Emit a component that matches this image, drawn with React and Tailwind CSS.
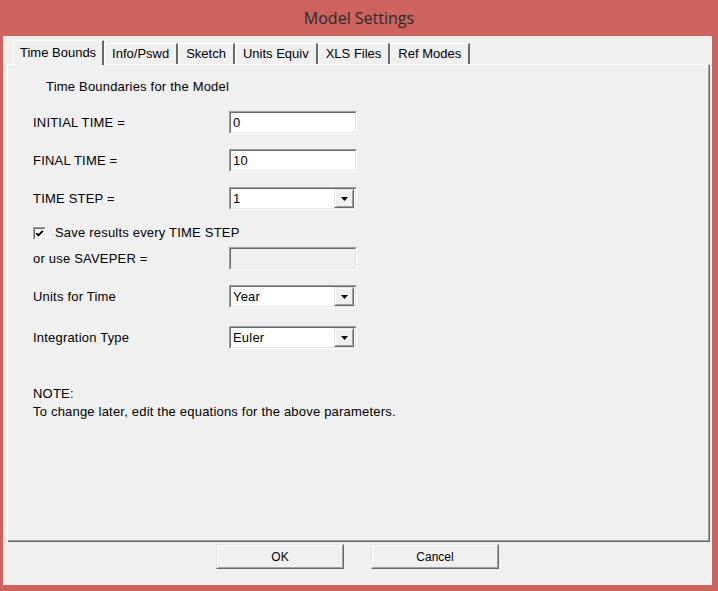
import React from 'react';

const font = { fontFamily: '"Liberation Sans", Arial, sans-serif' };

// classic 3D sunken frame (text fields, combo boxes, checkbox)
const Sunken = ({ className = '', inner = 'bg-white', children }) => (
  <div className={`flex border border-t-[#a0a0a0] border-l-[#a0a0a0] border-r-white border-b-white ${className}`}>
    <div className={`flex flex-1 items-center border border-t-[#696969] border-l-[#696969] border-r-[#e3e3e3] border-b-[#e3e3e3] ${inner}`}>
      {children}
    </div>
  </div>
);

// classic 3D raised frame (buttons)
const Raised = ({ className = '', children }) => (
  <div className={`flex border border-t-[#e3e3e3] border-l-[#e3e3e3] border-r-[#696969] border-b-[#696969] ${className}`}>
    <div className="flex flex-1 items-center justify-center border border-t-white border-l-white border-r-[#a0a0a0] border-b-[#a0a0a0] bg-[#f0f0f0]">
      {children}
    </div>
  </div>
);

const TextField = ({ value, disabled }) => (
  <Sunken className="w-[128px] h-[23px]" inner={disabled ? 'bg-[#f0f0f0]' : 'bg-white'}>
    <span className="pl-[2px] text-[13px] tracking-[0.2px] text-black">{value}</span>
  </Sunken>
);

const Combo = ({ value }) => (
  <Sunken className="w-[128px] h-[23px]">
    <span className="flex-1 pl-[2px] text-[13px] tracking-[0.2px] text-black">{value}</span>
    <Raised className="w-[20px] h-[19px] mr-px">
      <svg width="7" height="4" viewBox="0 0 7 4">
        <path d="M0 0h7L3.5 4z" fill="#000" />
      </svg>
    </Raised>
  </Sunken>
);

const Row = ({ label, children, className = '' }) => (
  <div className={`flex items-center ${className}`}>
    <span className="w-[196px] text-[13px] tracking-[0.2px] text-black">{label}</span>
    {children}
  </div>
);

const tabs = ['Time Bounds', 'Info/Pswd', 'Sketch', 'Units Equiv', 'XLS Files', 'Ref Modes'];

export default function App() {
  return (
    <div className="w-[718px] h-[591px] bg-[#cd625e] flex flex-col" style={font}>
      <div className="h-[36px] flex items-center justify-center">
        <span className="text-[16px] text-[#2b2b2b]" style={{ fontFamily: '"Open Sans", "Noto Sans", sans-serif' }}>
          Model Settings
        </span>
      </div>

      <div className="flex-1 ml-[3px] mr-[6px] mb-[6px] bg-[#f0f0f0] flex flex-col">
        {/* tab strip */}
        <div className="flex items-end h-[28px] pl-[10px]">
          {tabs.map((t, i) => (
            <div
              key={t}
              className={
                i === 0
                  ? 'relative z-10 h-[25px] -mb-px px-[6px] flex items-center border-t border-l border-t-white border-l-white border-r-2 border-r-[#696969] bg-[#f0f0f0] text-[13px] text-black'
                  : 'h-[21px] px-[7px] flex items-center border-t border-l border-t-white border-l-white border-r-2 border-r-[#696969] bg-[#f0f0f0] text-[13px] text-black'
              }
            >
              {t}
            </div>
          ))}
        </div>

        {/* panel */}
        <div className="ml-[4px] mr-[3px] h-[477px] flex border border-t-white border-l-white border-r-[#a0a0a0] border-b-[#a0a0a0] shadow-[1px_1px_0_#696969]">
          <div className="flex-1 flex flex-col pl-[25px]">
            <div className="mt-[14px] ml-[13px] h-[16px] flex items-center text-[13px] tracking-[0.2px] text-black">
              Time Boundaries for the Model
            </div>

            <Row label="INITIAL TIME =" className="mt-[16px]">
              <TextField value="0" />
            </Row>
            <Row label="FINAL TIME =" className="mt-[15px]">
              <TextField value="10" />
            </Row>
            <Row label="TIME STEP =" className="mt-[15px]">
              <Combo value="1" />
            </Row>

            <div className="mt-[15px] h-[16px] flex items-center gap-[9px]">
              <Sunken className="w-[13px] h-[13px]">
                <svg width="9" height="9" viewBox="0 0 9 9" className="block">
                  <path d="M1.2 4.2l2.2 2.2L7.8 1.8" fill="none" stroke="#000" strokeWidth="1.9" />
                </svg>
              </Sunken>
              <span className="text-[13px] tracking-[0.2px] text-black">Save results every TIME STEP</span>
            </div>

            <Row label="or use SAVEPER =" className="mt-[6px]">
              <TextField value="" disabled />
            </Row>
            <Row label="Units for Time" className="mt-[15px]">
              <Combo value="Year" />
            </Row>
            <Row label="Integration Type" className="mt-[18px]">
              <Combo value="Euler" />
            </Row>

            <div className="mt-[36px] text-[13px] tracking-[0.2px] leading-[18px] text-black">
              <div>NOTE:</div>
              <div>To change later, edit the equations for the above parameters.</div>
            </div>
          </div>
        </div>

        {/* buttons */}
        <div className="mt-[3px] flex justify-center gap-[27px]">
          <Raised className="w-[128px] h-[25px]">
            <span className="text-[12px] text-black">OK</span>
          </Raised>
          <Raised className="w-[128px] h-[25px]">
            <span className="text-[12px] text-black">Cancel</span>
          </Raised>
        </div>
      </div>
    </div>
  );
}
